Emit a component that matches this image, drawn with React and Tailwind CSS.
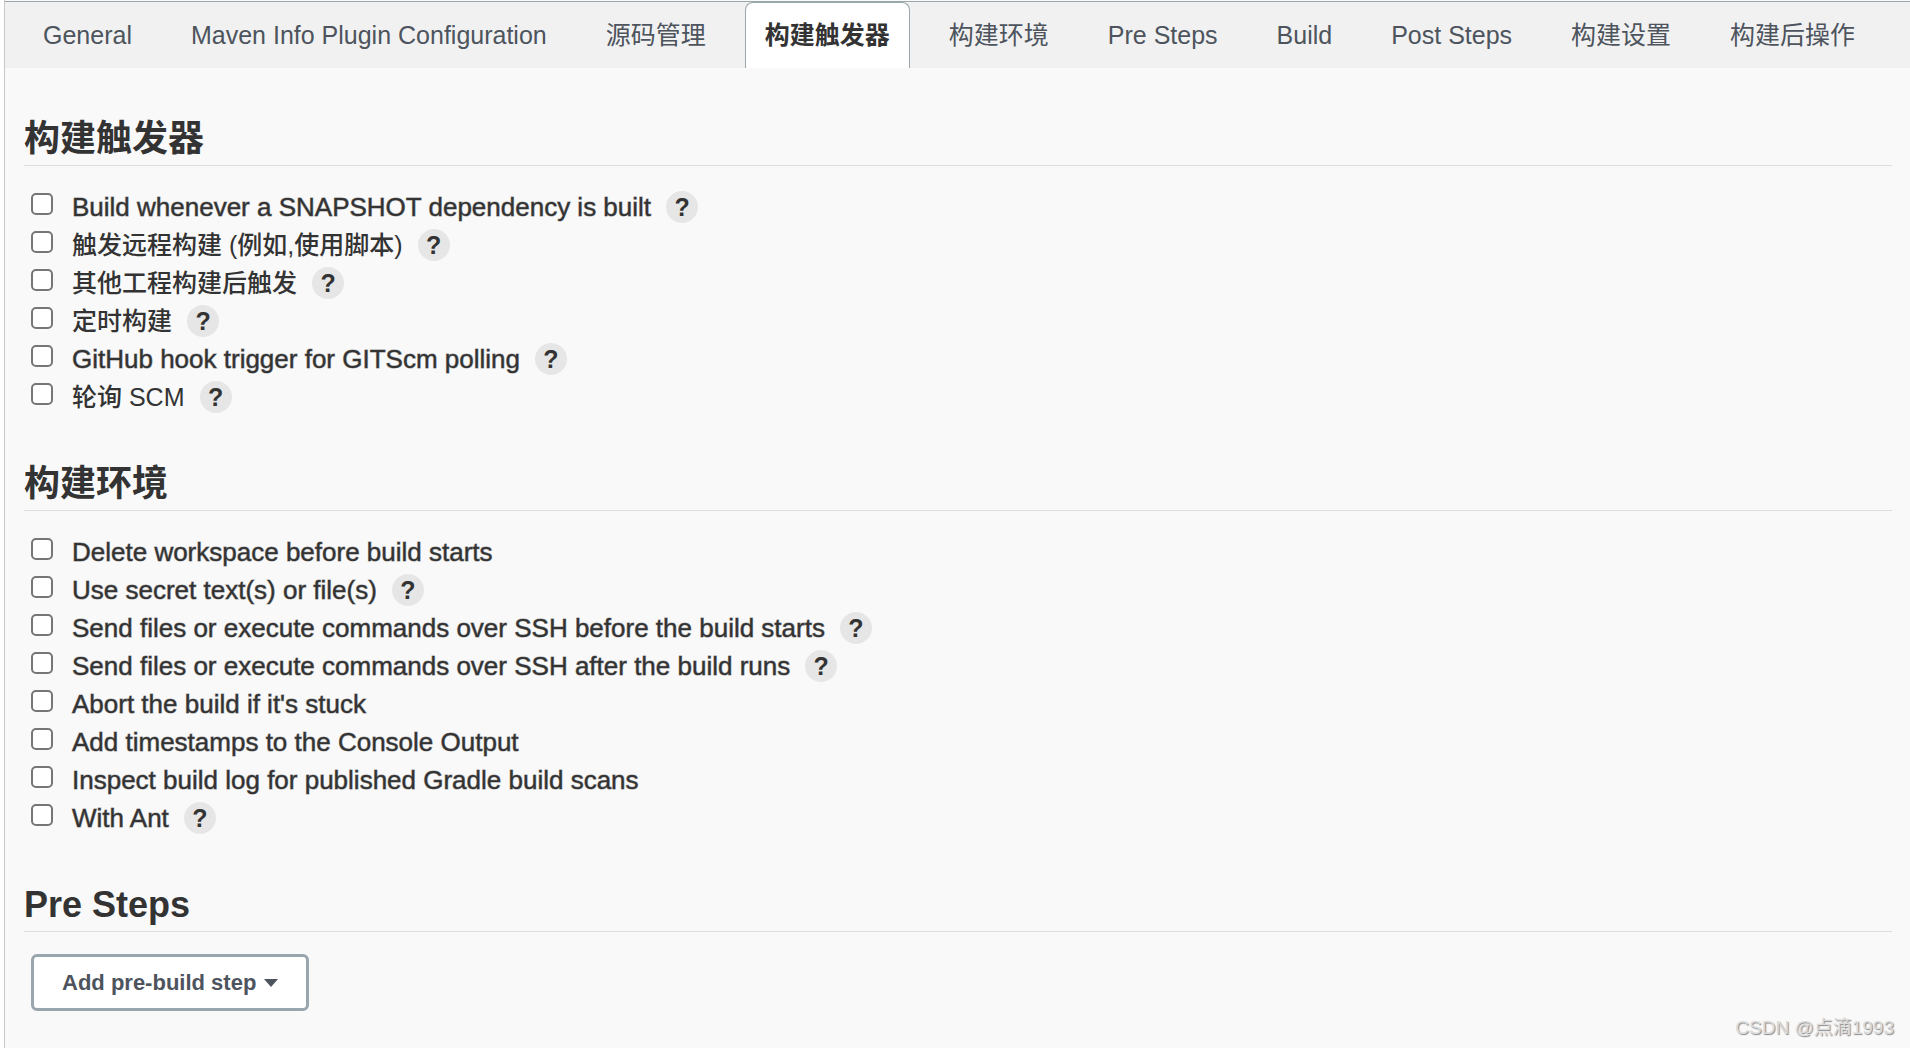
import clsx from "clsx"

const tabs = [
  "General",
  "Maven Info Plugin Configuration",
  "源码管理",
  "构建触发器",
  "构建环境",
  "Pre Steps",
  "Build",
  "Post Steps",
  "构建设置",
  "构建后操作",
]

const triggers = [
  {id: "snapshot", label: "Build whenever a SNAPSHOT dependency is built", help: true},
  {id: "remote", label: "触发远程构建 (例如,使用脚本)", lang: "zh", help: true},
  {id: "upstream", label: "其他工程构建后触发", lang: "zh", help: true},
  {id: "timer", label: "定时构建", lang: "zh", help: true},
  {id: "github", label: "GitHub hook trigger for GITScm polling", help: true},
  {id: "poll-scm", label: "轮询 SCM", lang: "zh", help: true},
]

const environment = [
  {id: "clean", label: "Delete workspace before build starts"},
  {id: "secrets", label: "Use secret text(s) or file(s)", help: true},
  {id: "ssh-before", label: "Send files or execute commands over SSH before the build starts", help: true},
  {id: "ssh-after", label: "Send files or execute commands over SSH after the build runs", help: true},
  {id: "abort", label: "Abort the build if it's stuck"},
  {id: "timestamps", label: "Add timestamps to the Console Output"},
  {id: "gradle", label: "Inspect build log for published Gradle build scans"},
  {id: "ant", label: "With Ant", help: true},
]

function TabBar({active}) {
  return (
    <nav className="mt-px flex h-[67px] gap-[19px] border-t border-[#9aa6a9] bg-[#f1f1f1] px-[18px] text-[25px]">
      {tabs.map(tab => (
        <a
          key={tab}
          href="#"
          className={clsx(
            "flex items-center rounded-t-lg border border-b-0 px-[19px] whitespace-nowrap",
            tab === active
              ? "border-[#9aa6ae] bg-white font-bold text-[#333]"
              : "border-transparent text-[#4d545d]"
          )}
        >
          {tab}
        </a>
      ))}
    </nav>
  )
}

function Section({title, children}) {
  return (
    <section className="pt-[46px]">
      <h2 className="border-b border-[#dcdfe0] pb-1 text-[36px] leading-[44px] font-bold">
        {title}
      </h2>
      {children}
    </section>
  )
}

function OptionList({options}) {
  return (
    <ul className="pt-[22px] pl-[7px]">
      {options.map(({id, label, lang = "en", help}) => (
        <li key={id} className="flex h-[38px] items-center">
          <input
            id={id}
            type="checkbox"
            className="mb-1.5 size-[22px] appearance-none rounded-[5px] border-2 border-[#767676] bg-white checked:bg-[#0b6aa2]"
          />
          {/* Liberation Sans has no medium weight, so a faint stroke thickens the latin labels */}
          <label
            htmlFor={id}
            lang={lang}
            className={clsx(
              "ml-[19px] leading-8 font-medium",
              lang === "zh" ? "text-[25px]" : "text-[26px] [-webkit-text-stroke:1px_rgb(51_51_51/0.5)]"
            )}
          >
            {label}
          </label>
          {help && (
            <button
              type="button"
              aria-label={`Help: ${label}`}
              className="ml-[15px] flex size-8 items-center justify-center rounded-full bg-[#e6e6e6] text-[25px] leading-8 font-bold"
            >
              ?
            </button>
          )}
        </li>
      ))}
    </ul>
  )
}

export default function App() {
  return (
    <div className="relative min-h-screen bg-white pl-1 font-['Liberation_Sans','Noto_Sans_CJK_SC',sans-serif] text-[#333]">
      <main className="flex min-h-screen flex-col border-l border-[#c8c8c8] bg-[#f9f9f9]">
        <TabBar active="构建触发器" />
        <div className="pt-[3px] pr-[18px] pb-9 pl-[19px]">
          <Section title="构建触发器">
            <OptionList options={triggers} />
          </Section>
          <Section title="构建环境">
            <OptionList options={environment} />
          </Section>
          <Section title="Pre Steps">
            <button
              type="button"
              className="mt-[22px] ml-[7px] flex h-[57px] items-center gap-2 rounded-md border-3 border-[#9aa6ae] bg-white px-[28px] text-[22px] font-bold text-[#4d545d]"
            >
              Add pre-build step
              <svg viewBox="0 0 14 8" className="h-2 w-[14px] fill-current">
                <path d="M0 0h14L7 8z" />
              </svg>
            </button>
          </Section>
        </div>
      </main>
      <span className="absolute right-4 bottom-2 text-[19px] leading-6 text-[#dcdcdc] [text-shadow:1px_1px_1px_#888]">
        CSDN @点滴1993
      </span>
    </div>
  )
}
